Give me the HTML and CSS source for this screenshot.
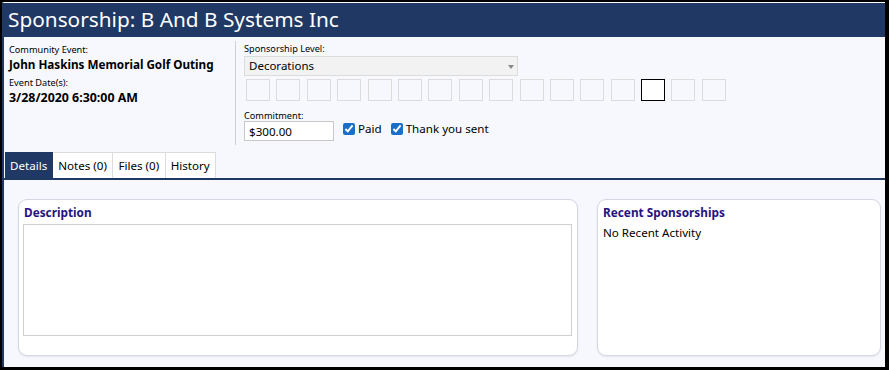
FILE: index.html
```html
<!DOCTYPE html>
<html lang="en">

<head>
    <meta charset="UTF-8">
    <title>Sponsorship</title>
    <link rel="stylesheet" href="styles.css">
</head>

<body>

    <div class="window">
        <div class="title-bar">Sponsorship: B And B Systems Inc</div>

        <div class="info">
            <div class="event">
                <div class="label">Community Event:</div>
                <div class="value">John Haskins Memorial Golf Outing</div>
                <div class="label">Event Date(s):</div>
                <div class="value date">3/28/2020 6:30:00 AM</div>
            </div>

            <div class="sponsorship">
                <div class="label">Sponsorship Level:</div>
                <div class="dropdown">Decorations<span class="arrow"></span></div>
                <div class="swatches">
                    <span class="swatch"></span><span class="swatch"></span><span class="swatch"></span><span class="swatch"></span>
                    <span class="swatch"></span><span class="swatch"></span><span class="swatch"></span><span class="swatch"></span>
                    <span class="swatch"></span><span class="swatch"></span><span class="swatch"></span><span class="swatch"></span>
                    <span class="swatch"></span><span class="swatch selected"></span><span class="swatch"></span><span class="swatch"></span>
                </div>
                <div class="label">Commitment:</div>
                <div class="commit-row">
                    <div class="money">$300.00</div>
                    <label class="check"><input type="checkbox" checked> Paid</label>
                    <label class="check"><input type="checkbox" checked> Thank you sent</label>
                </div>
            </div>
        </div>

        <div class="tabs">
            <div class="tab active">Details</div>
            <div class="tab">Notes (0)</div>
            <div class="tab">Files (0)</div>
            <div class="tab">History</div>
        </div>

        <div class="content">
            <div class="card">
                <h3>Description</h3>
                <div class="description-box"></div>
            </div>
            <div class="card">
                <h3>Recent Sponsorships</h3>
                <p>No Recent Activity</p>
            </div>
        </div>
    </div>

</body>

</html>
```

FILE: styles.css
```css
body {
    margin: 0;
    padding: 2px 4px 4px 2px;
    height: 100vh;
    box-sizing: border-box;
    background-color: #000;
    font-family: "Noto Sans", "Open Sans", sans-serif;
    color: #000;
}

.window {
    height: 100%;
    display: flex;
    flex-direction: column;
    background-color: #f7f8fe;
    border-left: 2px solid #1f3864;
    border-top: 1px solid #fff;
}

.title-bar {
    height: 34px;
    line-height: 33px;
    padding-left: 4px;
    background-color: #1f3864;
    color: #fff;
    font-size: 20.8px;
}

.info {
    display: flex;
    height: 113px;
    padding-top: 4px;
    box-sizing: border-box;
}

.event {
    width: 226px;
    padding: 2px 0 0 5px;
    margin-bottom: 5px;
    border-right: 1px solid #d0d0d0;
}

.label {
    font-size: 9.2px;
    line-height: 13px;
}

.value {
    font-size: 11.7px;
    font-weight: bold;
    line-height: 17px;
    margin-bottom: 3px;
}

.value.date {
    font-size: 12.4px;
}

.sponsorship {
    padding: 1px 0 0 8px;
}

.dropdown {
    position: relative;
    width: 268px;
    height: 18px;
    line-height: 18px;
    padding-left: 4px;
    margin-top: 1px;
    border: 1px solid #dcdcdc;
    background-color: #f2f2f2;
    font-size: 11.5px;
}

.arrow {
    position: absolute;
    right: 3px;
    top: 8px;
    border-left: 3.5px solid transparent;
    border-right: 3.5px solid transparent;
    border-top: 4px solid #8a8a8a;
}

.swatches {
    display: flex;
    gap: 6.4px;
    margin: 3px 0 8px 2px;
}

.swatch {
    width: 22px;
    height: 20px;
    border: 1px solid #dcdcdc;
}

.swatch.selected {
    border-color: #000;
    background-color: #fff;
}

.commit-row {
    display: flex;
    align-items: center;
    gap: 9px;
    margin-top: -1px;
}

.money {
    width: 84px;
    height: 18px;
    line-height: 19px;
    padding-left: 4px;
    border: 1px solid #c8c8c8;
    background-color: #fff;
    font-size: 11.6px;
}

.check {
    display: flex;
    align-items: center;
    gap: 2px;
    font-size: 11.6px;
    margin-top: -5px;
}

.check input {
    width: 12px;
    height: 12px;
    margin: 0 1px 0 0;
    accent-color: #1a6fc9;
}

.tabs {
    display: flex;
    margin-top: 2px;
    border-bottom: 2px solid #1f3864;
}

.tab {
    height: 25px;
    line-height: 26px;
    padding: 0 5.5px 0 5px;
    border: 1px solid #dcdcdc;
    border-bottom: none;
    border-left: none;
    background-color: #fff;
    font-size: 11.6px;
}

.tab:first-child {
    margin-left: 1px;
    padding: 0 5px;
}

.tab.active {
    background-color: #1f3864;
    border-color: #1f3864;
    color: #fff;
}

.content {
    flex: 1;
    display: grid;
    grid-template-columns: 560px 284px;
    gap: 19px;
    padding: 19px 4px 11px 14px;
}

.card {
    background-color: #fff;
    border: 1px solid #d3d7e2;
    border-radius: 9px;
    box-shadow: 0 1px 2px rgba(0, 0, 0, 0.08);
    padding: 3px 5px 19px 4px;
    display: flex;
    flex-direction: column;
}

.card h3 {
    margin: 0 0 2px 1px;
    font-size: 11.8px;
    line-height: 19px;
    color: #27137f;
}

.card p {
    margin: 0 0 0 1px;
    font-size: 11.6px;
    line-height: 18px;
}

.description-box {
    flex: 1;
    border: 1px solid #cfcfcf;
}
```
